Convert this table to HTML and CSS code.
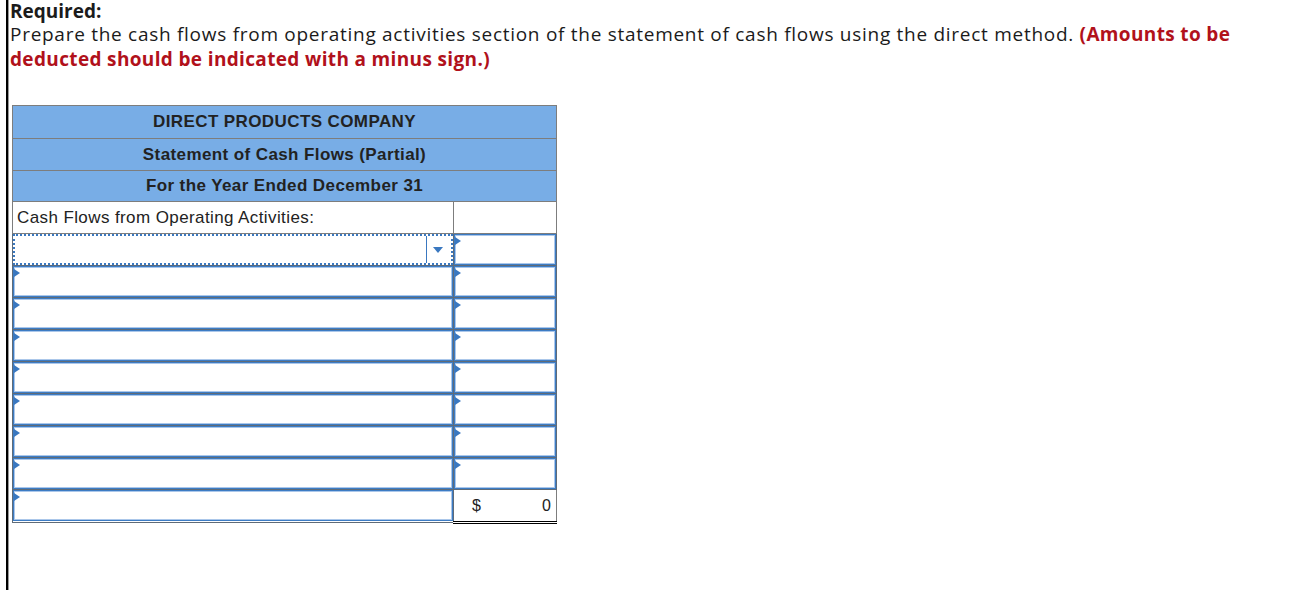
FILE: index.html
```html
<!DOCTYPE html>
<html>
<head>
<meta charset="utf-8">
<link rel="stylesheet" href="styles.css">
</head>
<body>
<div class="page">
  <div class="q">
    <div class="req">Required:</div>
    <p class="prompt">Prepare the cash flows from operating activities section of the statement of cash flows using the direct method. <strong class="red">(Amounts to be deducted should be indicated with a minus sign.)</strong></p>
  </div>
  <table class="sheet">
    <colgroup><col class="c1"><col class="c2"></colgroup>
    <tr class="h h1"><th colspan="2">DIRECT PRODUCTS COMPANY</th></tr>
    <tr class="h h2"><th colspan="2">Statement of Cash Flows (Partial)</th></tr>
    <tr class="h h3"><th colspan="2">For the Year Ended December 31</th></tr>
    <tr class="lbl"><td>Cash Flows from Operating Activities:</td><td></td></tr>
    <tr class="row">
      <td><div class="sel"><span class="sep"></span><span class="arrow"></span></div></td>
      <td><div class="inp"><span class="tri"></span></div></td>
    </tr>
    <tr class="row"><td><div class="inp"><span class="tri"></span></div></td><td><div class="inp"><span class="tri"></span></div></td></tr>
    <tr class="row"><td><div class="inp"><span class="tri"></span></div></td><td><div class="inp"><span class="tri"></span></div></td></tr>
    <tr class="row"><td><div class="inp"><span class="tri"></span></div></td><td><div class="inp"><span class="tri"></span></div></td></tr>
    <tr class="row"><td><div class="inp"><span class="tri"></span></div></td><td><div class="inp"><span class="tri"></span></div></td></tr>
    <tr class="row"><td><div class="inp"><span class="tri"></span></div></td><td><div class="inp"><span class="tri"></span></div></td></tr>
    <tr class="row"><td><div class="inp"><span class="tri"></span></div></td><td><div class="inp"><span class="tri"></span></div></td></tr>
    <tr class="row"><td><div class="inp"><span class="tri"></span></div></td><td><div class="inp"><span class="tri"></span></div></td></tr>
    <tr class="row last"><td><div class="inp"><span class="tri"></span></div></td><td class="total"><div class="tot"><span>$</span><span>0</span></div></td></tr>
  </table>
</div>
</body>
</html>
```
FILE: styles.css
```css
html, body { margin: 0; padding: 0; background: #fff; }
.page {
  margin-left: 6px;
  border-left: 2px solid #000;
  box-shadow: 1px 0 0 #9a9a9a inset;
  min-height: 590px;
  padding-left: 1px;
  box-sizing: border-box;
}
.q {
  font-family: "Open Sans", Lato, sans-serif;
  font-size: 19px;
  line-height: 24.5px;
  color: #1b1b1b;
  padding: 1px 0 0 1px;
  max-width: 1290px;
}
.req { font-weight: 700; line-height: 20px; }
.prompt { margin: 1px 0 0; letter-spacing: 0.72px; }
.red { color: #b1111b; font-weight: 700; letter-spacing: 0.35px; }
.sheet {
  margin: 34px 0 0 3px;
  border-collapse: collapse;
  font-family: "Liberation Sans", Arial, sans-serif;
  font-size: 17px;
  letter-spacing: 0.4px;
  color: #222;
  table-layout: fixed;
  width: 544px;
}
.c1 { width: 441px; }
.c2 { width: 103px; }
.sheet th, .sheet td { border: 1px solid #7d7d7d; padding: 0; }
.h th { background: #78ade6; font-weight: 700; text-align: center; }
.h1 th { height: 32px; }
.h2 th { height: 31px; }
.h3 th { height: 30px; }
.lbl td { height: 31px; padding-left: 4px; }
.row td { height: 31px; vertical-align: top; border-color: #5f6b78; }
.inp {
  position: relative;
  height: 31px;
  box-sizing: border-box;
  border: 1px solid #3d7cc4;
  box-shadow: inset 0 0 0 1px #abc7ea;
  background: #fff;
}
.tri {
  position: absolute;
  left: 0; top: 2px;
  width: 0; height: 0;
  border-top: 4px solid transparent;
  border-bottom: 4px solid transparent;
  border-left: 6px solid #3a78c0;
}
.sel {
  position: relative;
  height: 31px;
  box-sizing: border-box;
  border: 2px dotted #3a78c0;
}
.sep { position: absolute; left: 411px; top: 0; bottom: 0; border-left: 1px solid #3a78c0; }
.arrow {
  position: absolute; left: 418px; top: 11px;
  width: 0; height: 0;
  border-left: 5px solid transparent;
  border-right: 5px solid transparent;
  border-top: 6px solid #3a78c0;
}
.row td.total { border-top: 1px solid #000; border-bottom: 3px double #000; border-right-color: #7d7d7d; vertical-align: middle; }
.tot { display: flex; justify-content: space-between; padding: 0 5px 0 18px; font-size: 16px; letter-spacing: 0; color: #222; }
```
